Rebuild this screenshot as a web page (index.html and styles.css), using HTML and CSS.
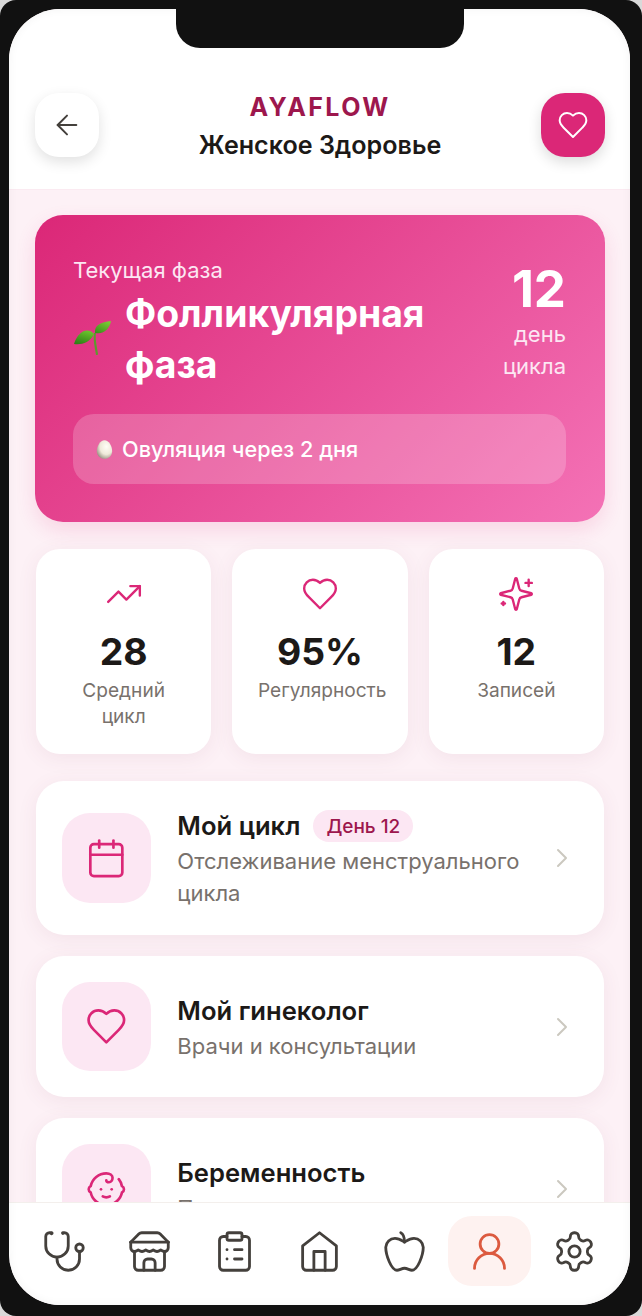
FILE: index.html
```html
<!DOCTYPE html>
<html lang="ru">
<head>
<meta charset="utf-8">
<title>AyaFlow</title>
<link rel="stylesheet" href="styles.css">
</head>
<body>
<div class="phone">
  <div class="notch"></div>
  <div class="screen">
    <header class="header">
      <button class="round-btn back">
        <svg class="ico-md" viewBox="0 0 24 24"><path d="m12 19-7-7 7-7"/><path d="M19 12H5"/></svg>
      </button>
      <div class="brand">
        <div class="brand-name">AYAFLOW</div>
        <div class="brand-sub">Женское Здоровье</div>
      </div>
      <button class="round-btn fav">
        <svg class="ico-md" viewBox="0 0 24 24"><path d="M19 14c1.49-1.46 3-3.21 3-5.5A5.5 5.5 0 0 0 16.5 3c-1.76 0-3 .5-4.5 2-1.5-1.5-2.74-2-4.5-2A5.5 5.5 0 0 0 2 8.5c0 2.3 1.5 4.05 3 5.5l7 7Z"/></svg>
      </button>
    </header>

    <main class="main">
      <section class="hero">
        <div class="hero-top">
          <div class="hero-left">
            <div class="hero-label">Текущая фаза</div>
            <div class="hero-phase">
              <svg class="seedling" viewBox="0 0 40 40">
                <defs>
                  <linearGradient id="leafA" x1="0.7" y1="0" x2="0.3" y2="1">
                    <stop offset="0" stop-color="#6cc52c"/>
                    <stop offset="1" stop-color="#2f7f18"/>
                  </linearGradient>
                  <linearGradient id="leafB" x1="0.8" y1="0" x2="0.2" y2="1">
                    <stop offset="0" stop-color="#7ccc35"/>
                    <stop offset="1" stop-color="#3c8f1c"/>
                  </linearGradient>
                </defs>
                <path class="stem" d="M21 14c-1 8 1 15 2 22 1 0 2 0 2-1C24 28 22 20 23 14z"/>
                <path fill="url(#leafA)" d="M21 15C15 8 5 12 1 25c7 1 16-1 20-10z"/>
                <path fill="url(#leafB)" d="M22 14C21 6 28 3 38 2c-1 7-7 14-16 12z"/>
              </svg>
              <h1 class="hero-title">Фолликулярная фаза</h1>
            </div>
          </div>
          <div class="hero-day">
            <div class="hero-num">12</div>
            <div class="hero-unit">день цикла</div>
          </div>
        </div>
        <div class="hero-note">
          <svg class="egg" viewBox="0 0 20 24">
            <defs>
              <radialGradient id="eggFill" cx="0.62" cy="0.35" r="0.75">
                <stop offset="0" stop-color="#fffdf6"/>
                <stop offset="0.55" stop-color="#efe9da"/>
                <stop offset="1" stop-color="#8e8778"/>
              </radialGradient>
            </defs>
            <path fill="url(#eggFill)" d="M10 1c5 0 9 6.500 9 13 0 5-4 9-9 9s-9-4-9-9C1 7.500 5 1 10 1z"/>
          </svg>
          <span>Овуляция через 2 дня</span>
        </div>
      </section>

      <section class="stats">
        <div class="stat">
          <svg class="ico-sm pink" viewBox="0 0 24 24"><polyline points="22 7 13.500 15.500 8.500 10.500 2 17"/><polyline points="16 7 22 7 22 13"/></svg>
          <div class="stat-num">28</div>
          <div class="stat-label">Средний цикл</div>
        </div>
        <div class="stat">
          <svg class="ico-sm pink" viewBox="0 0 24 24"><path d="M19 14c1.49-1.46 3-3.21 3-5.5A5.5 5.5 0 0 0 16.5 3c-1.76 0-3 .5-4.5 2-1.5-1.5-2.74-2-4.5-2A5.5 5.5 0 0 0 2 8.5c0 2.3 1.5 4.05 3 5.5l7 7Z"/></svg>
          <div class="stat-num">95%</div>
          <div class="stat-label">Регулярность</div>
        </div>
        <div class="stat">
          <svg class="ico-sm pink" viewBox="0 0 24 24"><path d="M9.937 15.500A2 2 0 0 0 8.500 14.063l-6.135-1.582a.5.5 0 0 1 0-.962L8.500 9.936A2 2 0 0 0 9.937 8.500l1.582-6.135a.5.5 0 0 1 .963 0L14.063 8.500A2 2 0 0 0 15.500 9.937l6.135 1.581a.5.5 0 0 1 0 .964L15.500 14.063a2 2 0 0 0-1.437 1.437l-1.582 6.135a.5.5 0 0 1-.963 0z"/><path d="M20 3v4"/><path d="M22 5h-4"/><path d="M4 17v2"/><path d="M5 18H3"/></svg>
          <div class="stat-num">12</div>
          <div class="stat-label">Записей</div>
        </div>
      </section>

      <section class="menu">
        <div class="card">
          <div class="card-icon">
            <svg class="ico-lg pink" viewBox="0 0 24 24"><path d="M8 2v4"/><path d="M16 2v4"/><rect x="3" y="4" width="18" height="18" rx="2"/><path d="M3 10h18"/></svg>
          </div>
          <div class="card-body">
            <div class="card-head"><span class="card-title">Мой цикл</span><span class="badge">День 12</span></div>
            <div class="card-sub">Отслеживание менструального цикла</div>
          </div>
          <svg class="chev" viewBox="0 0 24 24"><path d="m9 18 6-6-6-6"/></svg>
        </div>
        <div class="card">
          <div class="card-icon">
            <svg class="ico-lg pink" viewBox="0 0 24 24"><path d="M19 14c1.49-1.46 3-3.21 3-5.5A5.5 5.5 0 0 0 16.5 3c-1.76 0-3 .5-4.5 2-1.5-1.5-2.74-2-4.5-2A5.5 5.5 0 0 0 2 8.500c0 2.3 1.500 4.050 3 5.500l7 7Z"/></svg>
          </div>
          <div class="card-body">
            <div class="card-head"><span class="card-title">Мой гинеколог</span></div>
            <div class="card-sub">Врачи и консультации</div>
          </div>
          <svg class="chev" viewBox="0 0 24 24"><path d="m9 18 6-6-6-6"/></svg>
        </div>
        <div class="card">
          <div class="card-icon">
            <svg class="ico-lg pink" viewBox="0 0 24 24"><path d="M9 12h.01"/><path d="M15 12h.01"/><path d="M10 16c.5.3 1.200.5 2 .5s1.500-.2 2-.5"/><path d="M19 6.300a9 9 0 0 1 1.800 3.900 2 2 0 0 1 0 3.600 9 9 0 0 1-17.600 0 2 2 0 0 1 0-3.600A9 9 0 0 1 12 3c2 0 3.500 1.100 3.500 2.500s-.9 2.500-2 2.500c-.8 0-1.500-.4-1.500-1"/></svg>
          </div>
          <div class="card-body">
            <div class="card-head"><span class="card-title">Беременность</span></div>
            <div class="card-sub">Планирование и ведение</div>
          </div>
          <svg class="chev" viewBox="0 0 24 24"><path d="m9 18 6-6-6-6"/></svg>
        </div>
      </section>
    </main>

    <nav class="nav">
      <a class="nav-item"><svg class="ico-nav" viewBox="0 0 24 24"><path d="M4.800 2.300A.3.3 0 1 0 5 2H4a2 2 0 0 0-2 2v5a6 6 0 0 0 6 6a6 6 0 0 0 6-6V4a2 2 0 0 0-2-2h-1a.2.2 0 1 0 .3.3"/><path d="M8 15v1a6 6 0 0 0 6 6a6 6 0 0 0 6-6v-4"/><circle cx="20" cy="10" r="2"/></svg></a>
      <a class="nav-item"><svg class="ico-nav" viewBox="0 0 24 24"><path d="m2 7 4.410-4.410A2 2 0 0 1 7.830 2h8.340a2 2 0 0 1 1.420.59L22 7"/><path d="M4 12v8a2 2 0 0 0 2 2h12a2 2 0 0 0 2-2v-8"/><path d="M15 22v-4a2 2 0 0 0-2-2h-2a2 2 0 0 0-2 2v4"/><path d="M2 7h20"/><path d="M22 7v3a2 2 0 0 1-2 2a2.700 2.700 0 0 1-1.590-.63.7.7 0 0 0-.82 0A2.700 2.700 0 0 1 16 12a2.700 2.700 0 0 1-1.590-.63.7.7 0 0 0-.82 0A2.700 2.700 0 0 1 12 12a2.700 2.700 0 0 1-1.590-.63.7.7 0 0 0-.82 0A2.700 2.700 0 0 1 8 12a2.700 2.700 0 0 1-1.590-.63.7.7 0 0 0-.82 0A2.700 2.700 0 0 1 4 12a2 2 0 0 1-2-2V7"/></svg></a>
      <a class="nav-item"><svg class="ico-nav" viewBox="0 0 24 24"><rect x="8" y="2" width="8" height="4" rx="1"/><path d="M16 4h2a2 2 0 0 1 2 2v14a2 2 0 0 1-2 2H6a2 2 0 0 1-2-2V6a2 2 0 0 1 2-2h2"/><path d="M12 11h4"/><path d="M12 16h4"/><path d="M8 11h.01"/><path d="M8 16h.01"/></svg></a>
      <a class="nav-item"><svg class="ico-nav" viewBox="0 0 24 24"><path d="m3 9 9-7 9 7v11a2 2 0 0 1-2 2H5a2 2 0 0 1-2-2z"/><polyline points="9 22 9 12 15 12 15 22"/></svg></a>
      <a class="nav-item"><svg class="ico-nav" viewBox="0 0 24 24"><path d="M12 20.940c1.500 0 2.750 1.060 4 1.060 3 0 6-8 6-12.220A4.910 4.910 0 0 0 17 5c-2.220 0-4 1.440-5 2-1-.56-2.780-2-5-2a4.900 4.900 0 0 0-5 4.780C2 14 5 22 8 22c1.250 0 2.500-1.060 4-1.060Z"/><path d="M10 2c1 .5 2 2 2 5"/></svg></a>
      <a class="nav-item active"><svg class="ico-nav" viewBox="0 0 24 24"><circle cx="12" cy="8" r="5"/><path d="M20 21a8 8 0 0 0-16 0"/></svg></a>
      <a class="nav-item"><svg class="ico-nav" viewBox="0 0 24 24"><path d="M12.220 2h-.44a2 2 0 0 0-2 2v.18a2 2 0 0 1-1 1.730l-.43.25a2 2 0 0 1-2 0l-.15-.08a2 2 0 0 0-2.730.73l-.22.38a2 2 0 0 0 .73 2.730l.15.1a2 2 0 0 1 1 1.720v.51a2 2 0 0 1-1 1.740l-.15.09a2 2 0 0 0-.73 2.730l.22.38a2 2 0 0 0 2.730.73l.15-.08a2 2 0 0 1 2 0l.43.25a2 2 0 0 1 1 1.730V20a2 2 0 0 0 2 2h.44a2 2 0 0 0 2-2v-.18a2 2 0 0 1 1-1.730l.43-.25a2 2 0 0 1 2 0l.15.08a2 2 0 0 0 2.730-.73l.22-.39a2 2 0 0 0-.73-2.730l-.15-.08a2 2 0 0 1-1-1.740v-.5a2 2 0 0 1 1-1.740l.15-.09a2 2 0 0 0 .73-2.730l-.22-.38a2 2 0 0 0-2.730-.73l-.15.08a2 2 0 0 1-2 0l-.43-.25a2 2 0 0 1-1-1.730V4a2 2 0 0 0-2-2z"/><circle cx="12" cy="12" r="3"/></svg></a>
    </nav>
  </div>
</div>
</body>
</html>
```

FILE: styles.css
```css
* { box-sizing: border-box; }
html, body { margin: 0; padding: 0; height: 100%; background: #d9d9d9; }
body { font-family: Inter, "Noto Sans", sans-serif; color: #1c1917; overflow: hidden; }
svg { fill: none; stroke: currentColor; stroke-width: 1.5; stroke-linecap: round; stroke-linejoin: round; display: block; flex: none; }
.phone { position: relative; width: 642px; height: 1316px; padding: 9px 12px 11px 9px; background: #111111; border-radius: 16px; }
.notch { position: absolute; top: 0; left: 176px; width: 288px; height: 48px; background: #111111; border-radius: 0 0 24px 24px; z-index: 5; }
.screen { position: relative; display: flex; flex-direction: column; height: 100%; background: #fdf1f6; border-radius: 51px; overflow: hidden; }
.screen::after { content: ""; position: absolute; inset: 0; border-radius: 51px; box-shadow: inset 0 0 10px rgba(0,0,0,.05); pointer-events: none; }
.header { flex: none; height: 181px; padding: 84px 25px 0 26px; display: flex; justify-content: space-between; align-items: flex-start; background: #ffffff; border-bottom: 1px solid #fbeaf1; }
.round-btn { width: 64px; height: 64px; border: 0; padding: 0; border-radius: 24px; display: flex; align-items: center; justify-content: center; }
.back { background: #ffffff; color: #44403c; box-shadow: 0 5px 14px rgba(0,0,0,.12); }
.fav { background: #db2777; color: #ffffff; box-shadow: 0 5px 14px rgba(0,0,0,.14); }
.ico-md { width: 32px; height: 32px; }
.ico-sm { width: 38px; height: 38px; }
.ico-lg { width: 42.67px; height: 42.67px; }
.ico-nav { width: 45px; height: 45px; }
.pink { color: #db2777; }
.brand { display: flex; flex-direction: column; align-items: center; }
.brand-name { font-size: 25px; line-height: 28px; font-weight: 700; letter-spacing: 2.4px; color: #9d174d; }
.brand-sub { margin-top: 8px; font-size: 25.1px; line-height: 32px; font-weight: 600; color: #1c1917; }
.main { flex: 1; min-height: 0; overflow: hidden; padding: 25px 25px 0 26px; }
.hero { height: 307px; padding: 39px 39px 38px 38px; border-radius: 28px; background: linear-gradient(135deg, #db2777, #f472b6); color: #ffffff; box-shadow: 0 8px 20px rgba(219,39,119,.14); display: flex; flex-direction: column; justify-content: space-between; }
.hero-top { display: flex; justify-content: space-between; align-items: flex-start; }
.hero-label { font-size: 22px; line-height: 32px; color: #fce7f3; }
.hero-phase { display: flex; align-items: center; gap: 12px; margin-top: 2px; }
.seedling { width: 40px; height: 40px; stroke: none; }
.stem { fill: #5c9a2e; }
.hero-title { margin: 0; font-size: 37.33px; line-height: 51px; font-weight: 700; width: 330px; }
.hero-day { display: flex; flex-direction: column; align-items: flex-end; text-align: right; margin-top: 7px; }
.hero-num { font-size: 51px; line-height: 56px; font-weight: 700; }
.hero-unit { width: 70px; margin-top: 1px; font-size: 22px; line-height: 32px; color: #fce7f3; }
.hero-note { height: 70px; padding: 0 23px; display: flex; align-items: center; gap: 9px; border-radius: 21px; background: rgba(255,255,255,.2); font-size: 21.7px; font-weight: 500; }
.egg { width: 17px; height: 21px; stroke: none; }
.stats { display: grid; grid-template-columns: repeat(3, 1fr); gap: 21px; margin: 27px 1px 0; }
.stat { height: 205px; padding: 26px 8px 0; display: flex; flex-direction: column; align-items: center; text-align: center; background: #ffffff; border-radius: 24px; box-shadow: 0 4px 20px rgba(130,60,90,.08); }
.stat-num { margin-top: 17px; font-size: 37.33px; line-height: 44px; font-weight: 700; }
.stat-label { margin-top: 4px; font-size: 19.1px; line-height: 25.5px; color: #78716c; width: 124px; }
.menu { display: flex; flex-direction: column; gap: 21px; margin: 27px 1px 0; }
.card { display: flex; align-items: center; padding: 26px; background: #ffffff; border-radius: 28px; box-shadow: 0 4px 20px rgba(130,60,90,.08); }
.card-icon { width: 89.33px; height: 89.33px; flex: none; border-radius: 28px; background: #fce7f3; display: flex; align-items: center; justify-content: center; }
.card-body { flex: 1; min-width: 0; margin-left: 26px; }
.card-head { display: flex; align-items: center; gap: 13px; height: 38px; }
.card-title { font-size: 25.6px; line-height: 32px; font-weight: 600; color: #1c1917; }
.badge { padding: 0 13px; height: 32px; display: flex; align-items: center; border-radius: 16px; background: #fce7f3; color: #9d174d; font-size: 19px; font-weight: 500; }
.card-sub { font-size: 22px; line-height: 32px; color: #78716c; }
.chev { width: 32px; height: 32px; color: #cbc8bf; margin-left: 16px; }
.nav { flex: none; height: 103px; padding: 13px 14px 0; display: flex; justify-content: space-between; align-items: flex-start; background: #ffffff; border-top: 1px solid #f3efec; }
.nav-item { width: 83px; height: 70px; display: flex; align-items: center; justify-content: center; border-radius: 24px; color: #44403c; }
.nav-item.active { background: #fef2f0; color: #dc5a3f; }
```
